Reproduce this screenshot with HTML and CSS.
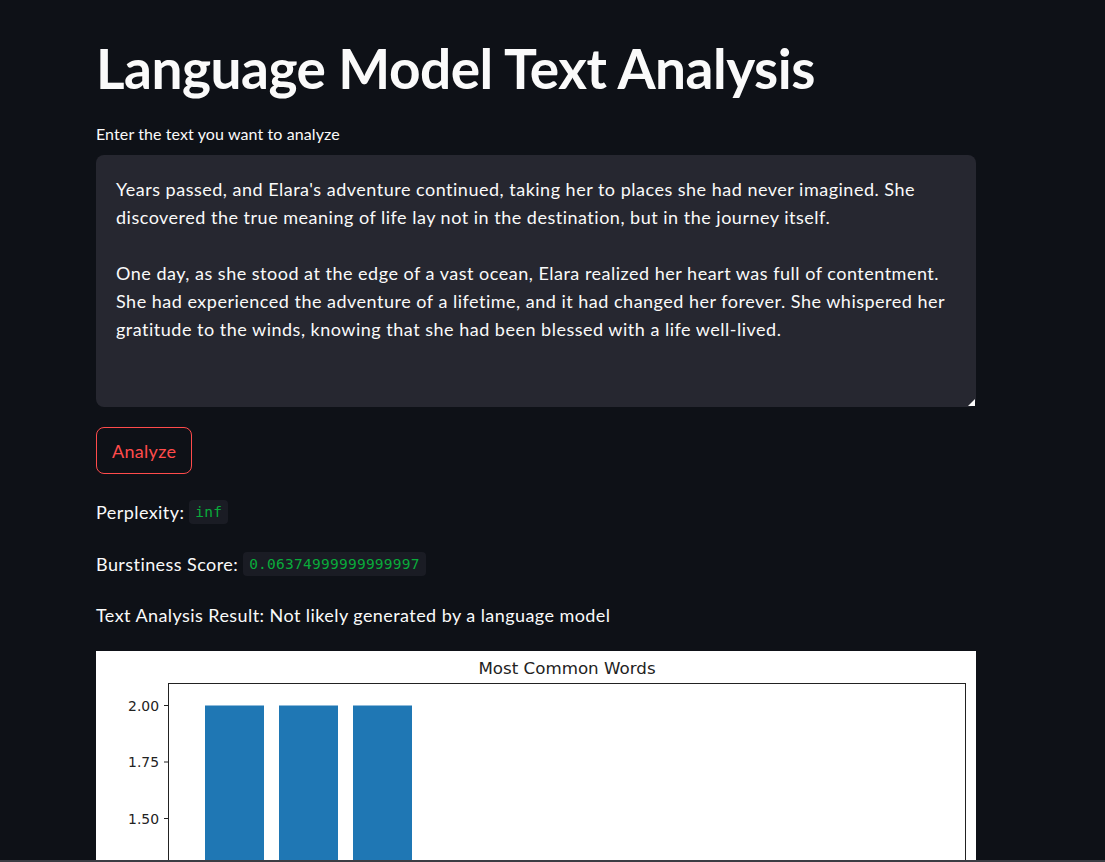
FILE: index.html
```html
<!DOCTYPE html>
<html lang="en">
<head>
<meta charset="utf-8">
<title>Language Model Text Analysis</title>
<link rel="stylesheet" href="styles.css">
</head>
<body>
<main class="main">
  <h1 class="title">Language Model Text Analysis</h1>
  <label class="label" for="txt">Enter the text you want to analyze</label>
  <div class="area-wrap">
    <textarea id="txt" class="area">Years passed, and Elara's adventure continued, taking her to places she had never imagined. She discovered the true meaning of life lay not in the destination, but in the journey itself.

One day, as she stood at the edge of a vast ocean, Elara realized her heart was full of contentment. She had experienced the adventure of a lifetime, and it had changed her forever. She whispered her gratitude to the winds, knowing that she had been blessed with a life well-lived.</textarea>
    <span class="grip"></span>
  </div>
  <button class="btn">Analyze</button>
  <p class="line line-first">Perplexity: <code class="code">inf</code></p>
  <p class="line">Burstiness Score: <code class="code">0.06374999999999997</code></p>
  <p class="line line-last">Text Analysis Result: Not likely generated by a language model</p>
  <div class="chart">
    <svg class="chart-svg" width="880" height="660" viewBox="0 0 880 660">
      <text x="471" y="23" class="c-title" text-anchor="middle">Most Common Words</text>
      <rect x="109" y="54.5" width="59" height="452" fill="#1f77b4"/>
      <rect x="183" y="54.5" width="59" height="452" fill="#1f77b4"/>
      <rect x="257" y="54.5" width="59" height="452" fill="#1f77b4"/>
      <rect x="72.5" y="32.5" width="797" height="496" fill="none" stroke="#222" stroke-width="1"/>
      <g stroke="#222" stroke-width="1">
        <line x1="68" y1="54.5" x2="72" y2="54.5"/>
        <line x1="68" y1="111" x2="72" y2="111"/>
        <line x1="68" y1="167.5" x2="72" y2="167.5"/>
        <line x1="68" y1="224" x2="72" y2="224"/>
        <line x1="68" y1="280.5" x2="72" y2="280.5"/>
      </g>
      <g class="c-tick" text-anchor="end">
        <text x="63" y="59.5">2.00</text>
        <text x="63" y="116">1.75</text>
        <text x="63" y="172.5">1.50</text>
        <text x="63" y="229">1.25</text>
        <text x="63" y="285.5">1.00</text>
      </g>
    </svg>
  </div>
</main>
<div class="edge"></div>
</body>
</html>
```

FILE: styles.css
```css
html, body {
  margin: 0;
  padding: 0;
  background: #0e1117;
}
body {
  color: #fafafa;
  font-family: "Lato", "Noto Sans", sans-serif;
}
.main {
  width: 880px;
  margin-left: 96px;
  padding-top: 33px;
  display: flex;
  flex-direction: column;
  align-items: flex-start;
}
.title {
  margin: 0;
  font-size: 55px;
  font-weight: 700;
  line-height: 70px;
  letter-spacing: -0.5px;
}
.label {
  margin-top: 21px;
  font-size: 16px;
  line-height: 20px;
  letter-spacing: 0.1px;
}
.area-wrap {
  margin-top: 11px;
  width: 880px;
  height: 252px;
  position: relative;
}
.area {
  box-sizing: border-box;
  width: 100%;
  height: 100%;
  background: #262730;
  border: none;
  border-radius: 8px;
  color: #fafafa;
  font-family: inherit;
  font-size: 18px;
  line-height: 28px;
  letter-spacing: 0.5px;
  padding: 20px 20px;
  resize: none;
  outline: none;
  overflow: hidden;
}
.grip {
  position: absolute;
  right: 1px;
  bottom: 1px;
  width: 0;
  height: 0;
  border-left: 7px solid transparent;
  border-bottom: 7px solid #fafafa;
}
.btn {
  margin-top: 20px;
  height: 47px;
  padding: 0 15px;
  background: transparent;
  border: 1px solid #ff4b4b;
  border-radius: 8px;
  color: #ff4b4b;
  font-family: inherit;
  font-size: 18px;
  letter-spacing: 0.3px;
}
.line {
  margin: 26px 0 0;
  font-size: 18px;
  line-height: 26px;
  letter-spacing: 0.43px;
  display: flex;
  align-items: center;
  gap: 5px;
}
.line-first {
  margin-top: 25px;
}
.line-last {
  margin-top: 25px;
}
.code {
  background: #1a1c24;
  color: #09ab3b;
  font-family: "DejaVu Sans Mono", monospace;
  font-size: 14.5px;
  letter-spacing: 0.25px;
  line-height: 24px;
  padding: 0 6px;
  border-radius: 4px;
}
.chart {
  margin-top: 23px;
  width: 880px;
  background: #ffffff;
  display: flex;
}
.c-title {
  font-family: "DejaVu Sans", sans-serif;
  font-size: 16.7px;
  fill: #222;
}
.c-tick {
  font-family: "DejaVu Sans", sans-serif;
  font-size: 13.9px;
  fill: #222;
}
.edge {
  position: fixed;
  left: 0;
  right: 0;
  bottom: 0;
  height: 2px;
  background: #3b3d44;
}
```
